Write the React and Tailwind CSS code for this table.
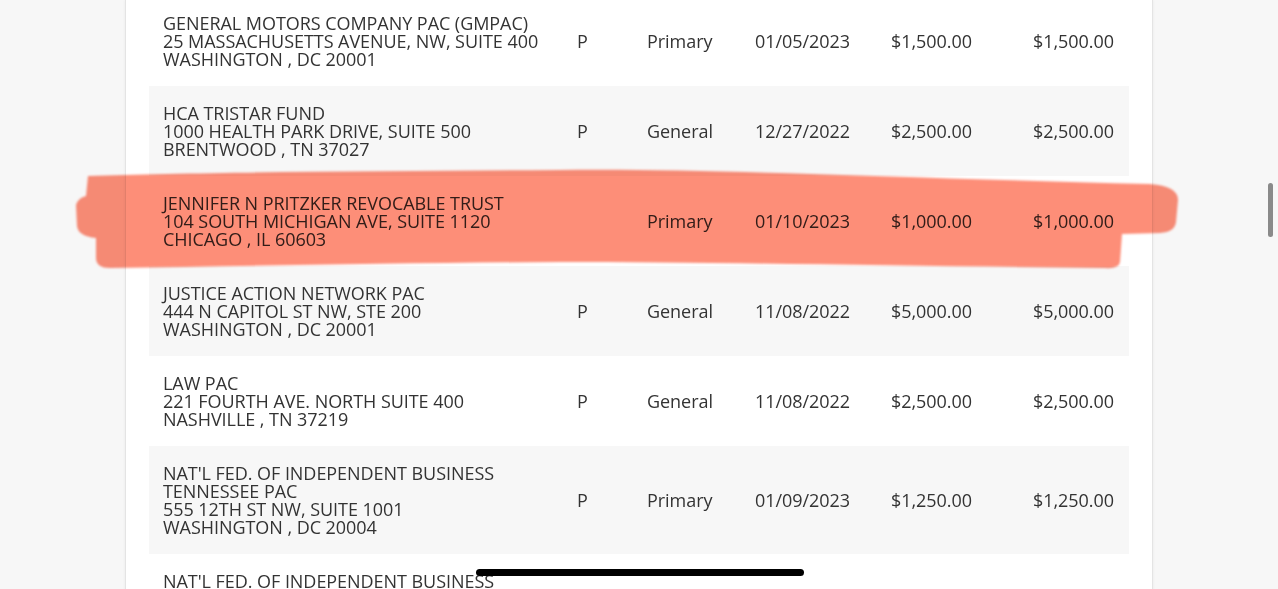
import React from "react";

const rows = [
  { lines: ["GENERAL MOTORS COMPANY PAC (GMPAC)", "25 MASSACHUSETTS AVENUE, NW, SUITE 400", "WASHINGTON , DC 20001"], p: "P", type: "Primary", date: "01/05/2023", amt: "$1,500.00", total: "$1,500.00" },
  { lines: ["HCA TRISTAR FUND", "1000 HEALTH PARK DRIVE, SUITE 500", "BRENTWOOD , TN 37027"], p: "P", type: "General", date: "12/27/2022", amt: "$2,500.00", total: "$2,500.00" },
  { lines: ["JENNIFER N PRITZKER REVOCABLE TRUST", "104 SOUTH MICHIGAN AVE, SUITE 1120", "CHICAGO , IL 60603"], p: "", type: "Primary", date: "01/10/2023", amt: "$1,000.00", total: "$1,000.00" },
  { lines: ["JUSTICE ACTION NETWORK PAC", "444 N CAPITOL ST NW, STE 200", "WASHINGTON , DC 20001"], p: "P", type: "General", date: "11/08/2022", amt: "$5,000.00", total: "$5,000.00" },
  { lines: ["LAW PAC", "221 FOURTH AVE. NORTH SUITE 400", "NASHVILLE , TN 37219"], p: "P", type: "General", date: "11/08/2022", amt: "$2,500.00", total: "$2,500.00" },
  { lines: ["NAT'L FED. OF INDEPENDENT BUSINESS", "TENNESSEE PAC", "555 12TH ST NW, SUITE 1001", "WASHINGTON , DC 20004"], p: "P", type: "Primary", date: "01/09/2023", amt: "$1,250.00", total: "$1,250.00" },
  { lines: ["NAT'L FED. OF INDEPENDENT BUSINESS", "TENNESSEE PAC", "555 12TH ST NW, SUITE 1001", "WASHINGTON , DC 20004"], p: "P", type: "General", date: "01/09/2023", amt: "$1,250.00", total: "$1,250.00" },
];

function Row({ r, i }) {
  return (
    <div className={`grid grid-cols-[414px_70px_108px_136px_142px_111px] items-center py-[18px] ${i % 2 === 1 ? "bg-[#f7f7f7]" : "bg-white"}`}>
      <div className="pl-[14px]">
        {r.lines.map((l, k) => (
          <div key={k} className="whitespace-nowrap">{l}</div>
        ))}
      </div>
      <div className="pl-[14px]">{r.p}</div>
      <div className="pl-[14px]">{r.type}</div>
      <div className="pl-[14px]">{r.date}</div>
      <div className="pl-[14px]">{r.amt}</div>
      <div className="pl-[14px]">{r.total}</div>
    </div>
  );
}

export default function App() {
  return (
    <div className="relative h-[589px] w-[1278px] overflow-hidden bg-[#f7f7f7] text-[#333] text-[18px] leading-[18px] tracking-[-0.05px]" style={{ fontFamily: '"Open Sans", "Liberation Sans", sans-serif' }}>
      <div className="ml-[125px] w-[1028px] h-[700px] overflow-hidden bg-white border-l border-r border-[#e4e4e4] px-[23px] shadow-[0_0_3px_rgba(0,0,0,0.06)]">
        <div className="mt-[-4px]">
          {rows.map((r, i) => (
            <Row key={i} r={r} i={i} />
          ))}
        </div>
      </div>

      {/* highlighter stroke */}
      <svg className="absolute inset-0 pointer-events-none mix-blend-multiply" width="1278" height="589" viewBox="0 0 1278 589">
        <defs>
          <filter id="soft" x="-5%" y="-20%" width="110%" height="140%">
            <feGaussianBlur stdDeviation="1.2" />
          </filter>
        </defs>
        <g filter="url(#soft)">
          <path
            d="M 88 176 C 200 172, 400 171, 560 170 C 700 168, 900 178, 1150 184 Q 1178 186, 1178 200 L 1176 222 Q 1175 232, 1160 233 L 1122 234 L 1120 262 Q 1119 269, 1105 268 C 900 266, 700 262, 560 262 C 400 263, 250 266, 110 268 Q 96 268, 96 258 L 96 238 Q 78 236, 77 226 L 76 205 Q 78 198, 86 196 Z"
            fill="#fd8e78"
          />
        </g>
      </svg>

      {/* scrollbar thumb */}
      <div className="absolute left-[1268px] top-[183px] w-[5px] h-[54px] rounded-full bg-[#8a8a8a]" />

      {/* home indicator */}
      <div className="absolute left-[476px] top-[569px] w-[328px] h-[7px] rounded-full bg-black" />
    </div>
  );
}
